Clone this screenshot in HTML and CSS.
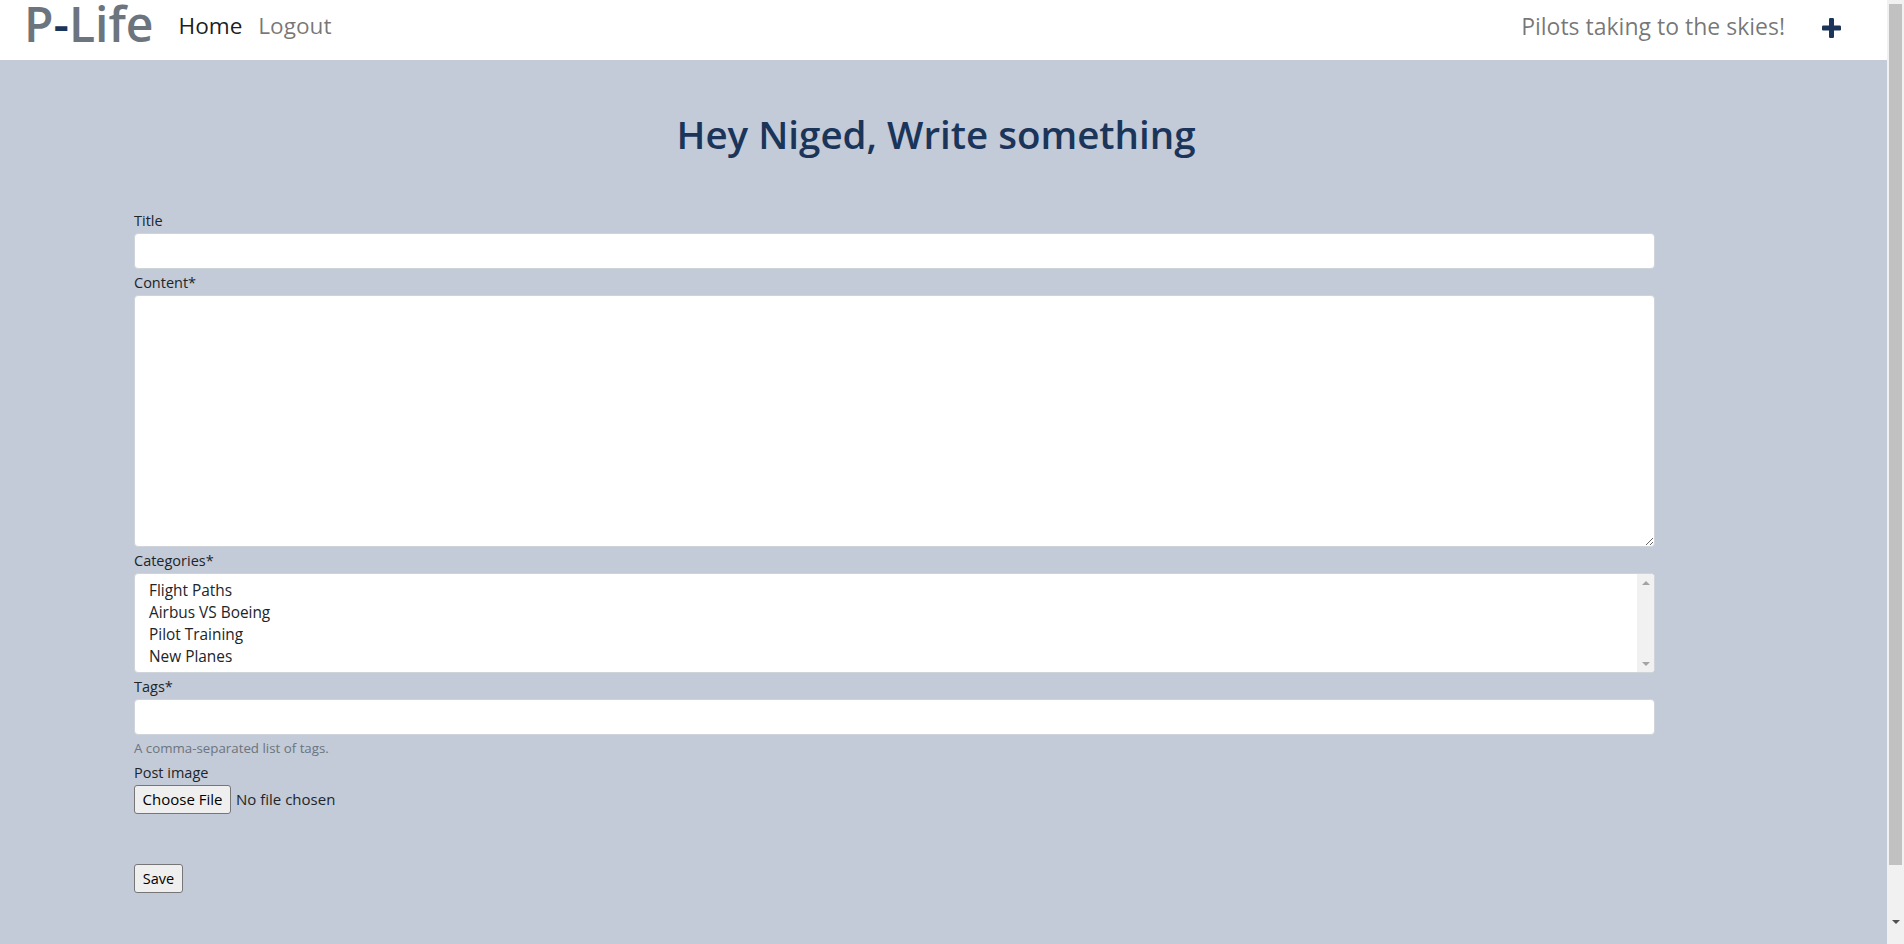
FILE: index.html
```html
<!DOCTYPE html>
<html lang="en">
<head>
<meta charset="utf-8">
<title>P-Life - New post</title>
<link rel="stylesheet" href="styles.css">
</head>
<body>
<div class="app">
<nav class="navbar">
  <a class="brand" href="#">P<span class="brand-dash">-</span>Life</a>
  <ul class="nav-links">
    <li><a class="nav-link active" href="#">Home</a></li>
    <li><a class="nav-link" href="#">Logout</a></li>
  </ul>
  <span class="tagline">Pilots taking to the skies!</span>
  <a class="add-post" href="#" aria-label="New post">
    <svg width="19" height="20" viewBox="0 0 19 20" aria-hidden="true">
      <rect x="7" y="0" width="5" height="20" rx="1.2" fill="#1b3459"/>
      <rect x="0" y="7.6" width="19" height="4.8" rx="1.2" fill="#1b3459"/>
    </svg>
  </a>
</nav>

<main class="page">
  <h1 class="page-title">Hey Niged, Write something</h1>

  <form class="post-form">
    <div class="field">
      <label for="id_title">Title</label>
      <input class="form-control" type="text" id="id_title">
    </div>
    <div class="field">
      <label for="id_content">Content*</label>
      <textarea class="form-control content-area" id="id_content"></textarea>
    </div>
    <div class="field">
      <label>Categories*</label>
      <div class="listbox" role="listbox" aria-multiselectable="true">
        <div class="listbox-options">
          <div class="option" role="option">Flight Paths</div>
          <div class="option" role="option">Airbus VS Boeing</div>
          <div class="option" role="option">Pilot Training</div>
          <div class="option" role="option">New Planes</div>
        </div>
        <div class="listbox-scroll" aria-hidden="true">
          <span class="arrow-up"></span>
          <span class="arrow-down"></span>
        </div>
      </div>
    </div>
    <div class="field">
      <label for="id_tags">Tags*</label>
      <input class="form-control" type="text" id="id_tags">
      <small class="help-text">A comma-separated list of tags.</small>
    </div>
    <div class="field">
      <label for="id_image">Post image</label>
      <div class="file-row">
        <button type="button" class="native-btn file-btn">Choose File</button>
        <span class="file-name">No file chosen</span>
      </div>
    </div>
    <div class="actions">
      <button type="submit" class="native-btn save-btn">Save</button>
    </div>
  </form>
</main>
</div>
<div class="page-scrollbar" aria-hidden="true">
  <div class="page-scrollbar-thumb"></div>
  <div class="page-scrollbar-arrow"></div>
</div>
</body>
</html>
```

FILE: styles.css
```css
html, body {
  margin: 0;
  padding: 0;
  height: 100%;
}

body {
  display: flex;
  overflow: hidden;
  background: #c3cad8;
  font-family: "Open Sans", "Noto Sans", sans-serif;
  color: #212529;
}

/* page scroller */
.app {
  flex: 1;
  min-width: 0;
  height: 100vh;
  overflow-y: auto;
}

/* classic window scrollbar */
.page-scrollbar {
  flex: none;
  width: 17px;
  height: 100vh;
  background: #f1f1f1;
  display: flex;
  flex-direction: column;
  align-items: center;
}

.page-scrollbar-thumb {
  width: 13px;
  height: 861px;
  margin-top: 4px;
  background: #c1c1c1;
}

.page-scrollbar-arrow {
  margin-top: 55px;
  width: 0;
  height: 0;
  border-left: 4px solid transparent;
  border-right: 4px solid transparent;
  border-top: 4px solid #505050;
}

/* ---------- navbar ---------- */
.navbar {
  display: flex;
  align-items: center;
  height: 60px;
  box-sizing: border-box;
  padding: 0 46px 8px 24px;
  background: #ffffff;
}

.brand {
  font-size: 48px;
  font-weight: 600;
  line-height: 46px;
  color: #6c757d;
  text-decoration: none;
  margin-right: 25px;
  margin-bottom: 4px;
}

.brand-dash {
  color: #1b3459;
}

.nav-links {
  display: flex;
  gap: 16px;
  list-style: none;
  margin: 0;
  padding: 0;
}

.nav-link {
  font-size: 22.6px;
  line-height: 30px;
  color: rgba(0, 0, 0, 0.55);
  text-decoration: none;
}

.nav-link.active {
  color: rgba(0, 0, 0, 0.9);
}

.tagline {
  margin-left: auto;
  font-size: 23px;
  line-height: 30px;
  color: rgba(0, 0, 0, 0.55);
}

.add-post {
  display: flex;
  margin-left: 37px;
  margin-top: 4px;
}

/* ---------- page ---------- */
.page {
  margin-left: 134px;
  width: 1604px;
  padding-bottom: 119px;
}

.page-title {
  margin: 51px 0 0;
  text-align: center;
  font-size: 38.5px;
  font-weight: 600;
  line-height: 47px;
  color: #1b3459;
}

.post-form {
  width: 1521px;
  margin-top: 52px;
  display: flex;
  flex-direction: column;
}

.field {
  display: flex;
  flex-direction: column;
}

.field + .field {
  margin-top: 3px;
}

.field label {
  font-size: 14.5px;
  line-height: 21px;
  margin-bottom: 2px;
}

.form-control {
  box-sizing: border-box;
  width: 100%;
  height: 36px;
  margin: 0;
  padding: 6px 12px;
  font-family: inherit;
  font-size: 15px;
  color: #212529;
  background: #ffffff;
  border: 1px solid #ced4da;
  border-radius: 4px;
  outline: none;
}

.content-area {
  height: 252px;
  resize: vertical;
  display: block;
}

/* categories list box */
.listbox {
  box-sizing: border-box;
  display: flex;
  height: 100px;
  background: #ffffff;
  border: 1px solid #ced4da;
  border-radius: 4px;
  overflow: hidden;
}

.listbox-options {
  flex: 1;
  padding: 6px 14px 4px;
}

.option {
  font-size: 15.4px;
  line-height: 22px;
  color: #212529;
}

.listbox-scroll {
  width: 17px;
  background: #f1f1f1;
  display: flex;
  flex-direction: column;
  justify-content: space-between;
  align-items: center;
  padding: 7px 0 6px;
}

.arrow-up,
.arrow-down {
  width: 0;
  height: 0;
  border-left: 4px solid transparent;
  border-right: 4px solid transparent;
}

.arrow-up {
  border-bottom: 4px solid #a3a3a3;
}

.arrow-down {
  border-top: 4px solid #a3a3a3;
}

.help-text {
  margin-top: 4px;
  font-size: 13.3px;
  line-height: 19.5px;
  color: #6c757d;
}

/* native-looking buttons */
.native-btn {
  box-sizing: border-box;
  height: 29px;
  margin: 0;
  font-family: inherit;
  font-size: 15px;
  color: #000000;
  background: #efefef;
  border: 1px solid #767676;
  border-radius: 3px;
}

.file-row {
  display: flex;
  align-items: center;
  gap: 5px;
}

.file-btn {
  width: 97px;
  padding: 0;
}

.file-name {
  font-size: 15px;
}

.actions {
  margin-top: 50px;
}

.save-btn {
  width: 49px;
  padding: 0;
  font-size: 14.5px;
}
```
